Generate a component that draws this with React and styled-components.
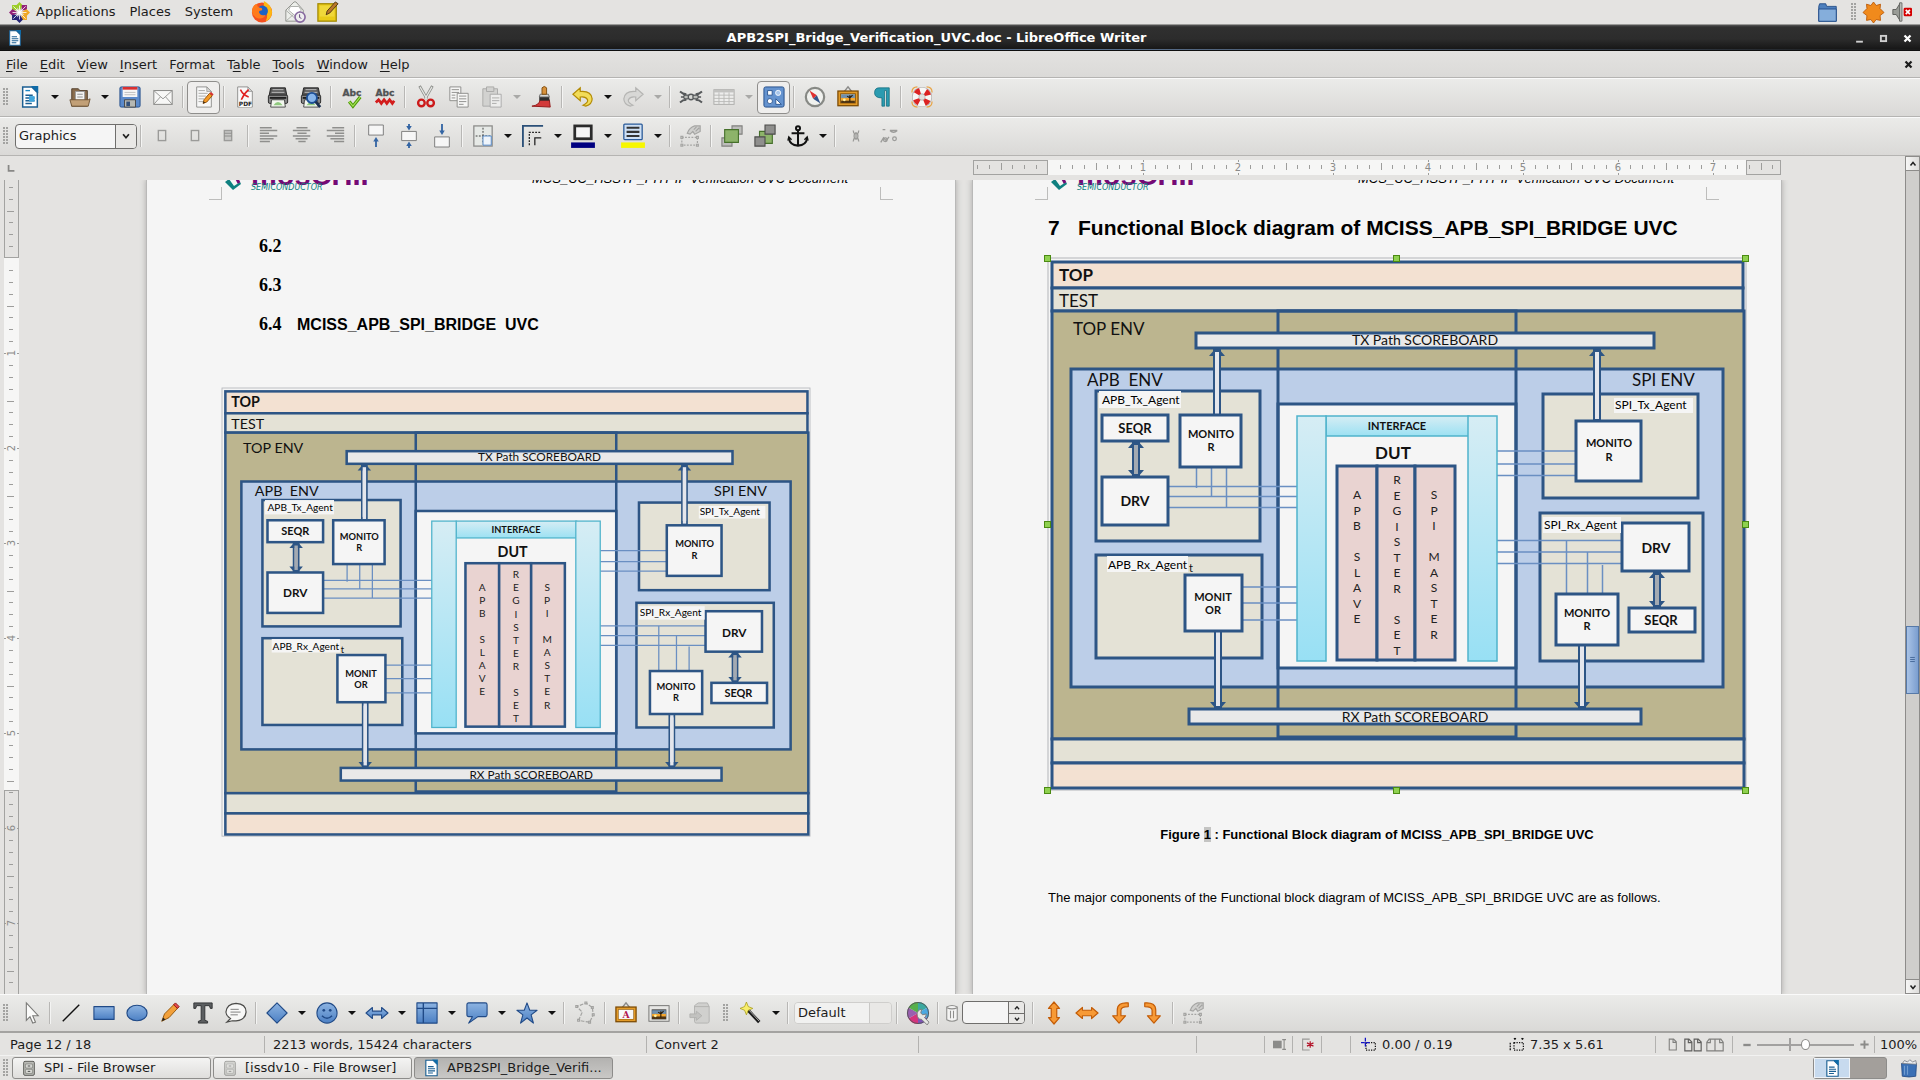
import React from 'react';
import styled, { createGlobalStyle } from 'styled-components';

const Global = createGlobalStyle`
  * { box-sizing: border-box; }
  body { margin: 0; background: #e4e3e1; }
  button, input, select { font: inherit; color: inherit; margin: 0; padding: 0; }
  svg { display: block; }
`;

const Screen = styled.div`
  display: flex;
  flex-direction: column;
  height: 100vh;
  overflow: hidden;
  background: #e4e3e1;
  color: #1c1c1c;
  font: 13px/16px 'DejaVu Sans', sans-serif;
`;

/* ---------- shared pieces ---------- */

const Svg = styled.svg`
  width: ${p => p.$w || 24}px;
  height: ${p => p.$h || 24}px;
  flex: none;
  overflow: visible;
`;

const Grip = styled.span`
  flex: none;
  width: 5px;
  height: 18px;
  margin: 0 ${p => p.$after || 5}px 0 ${p => p.$before || 3}px;
  background-image: radial-gradient(circle at 1px 1px, #a3a3a1 1px, transparent 1px);
  background-size: 3px 3px;
`;

const PlainButton = styled.button`
  border: 0;
  background: none;
  display: flex;
  align-items: center;
  justify-content: center;
`;

/* ---------- desktop panel ---------- */

const Panel = styled.header`
  flex: none;
  height: 25px;
  display: flex;
  align-items: center;
  justify-content: space-between;
  border-bottom: 1px solid #9a9a98;
`;
const PanelGroup = styled.div`
  display: flex;
  align-items: center;
  height: 24px;
  padding: 0 ${p => p.$end || 0}px 0 ${p => p.$start || 0}px;
  gap: ${p => p.$gap || 0}px;
`;
const PanelItem = styled(PlainButton)`
  height: 24px;
  white-space: nowrap;
  padding: 0 ${p => p.$pad || 0}px;
  gap: 6px;
`;

/* ---------- window ---------- */

const TitleBar = styled.div`
  flex: none;
  height: 26px;
  display: grid;
  grid-template-columns: 84px 1fr 84px;
  align-items: center;
  padding-left: 3px;
  color: #fff;
  background:
    linear-gradient(90deg, #1a1a1a, #5d7594 35%, #5d7594 55%, #1a1a1a) 0 24px / 100% 1px no-repeat,
    linear-gradient(#555 0, #303030 2px, #2c2c2c 14px, #171717 24px, #0c0c0c 26px);
`;
const TitleText = styled.h1`
  margin: 0;
  font: bold 13px/20px 'DejaVu Sans', sans-serif;
  text-align: center;
  padding-right: 50px;
`;
const WindowButtons = styled.div`
  display: flex;
  justify-content: flex-end;
  padding-right: 1px;
`;
const WindowButton = styled(PlainButton)`
  width: 24px;
  height: 20px;
`;

const MenuBar = styled.nav`
  flex: none;
  height: 27px;
  display: flex;
  align-items: center;
  border-bottom: 1px solid #b5b4b2;
  background: linear-gradient(#e3e2e0, #dbdad8);
`;
const MenuItem = styled(PlainButton)`
  height: 26px;
  padding: 1px 6px 0;
  u { text-underline-offset: 2px; }
`;
const MenuClose = styled(PlainButton)`
  margin-left: auto;
  width: 24px;
  height: 26px;
`;

const Bar = styled.div`
  flex: none;
  height: 39px;
  display: flex;
  align-items: center;
  padding-bottom: 1px;
  border-top: 1px solid #fafafa;
  border-bottom: ${p => (p.$heavy ? 2 : 1)}px solid ${p => (p.$heavy ? '#a4a3a1' : '#b5b4b2')};
  background: linear-gradient(#ebebe9, #dad9d7);
`;
const Tool = styled(PlainButton)`
  flex: none;
  width: ${p => p.$w || 33}px;
  height: 36px;
`;
const PressedTool = styled(Tool)`
  height: 33px;
  border: 1px solid #8f8e8c;
  border-radius: 4px;
  background: #efeeed;
`;
const Arrow = styled(PlainButton)`
  flex: none;
  width: 17px;
  height: 36px;
  &::after {
    content: '';
    border: 4px solid transparent;
    border-top-color: ${p => (p.$off ? '#a9a9a7' : '#111')};
    border-bottom: 0;
  }
`;
const Sep = styled.span`
  flex: none;
  width: 8px;
  height: 22px;
  background: linear-gradient(90deg, transparent 3px, #b8b7b5 3px, #b8b7b5 4px, #f4f4f3 4px, #f4f4f3 5px, transparent 5px);
`;
const SelectBox = styled.label`
  flex: none;
  width: ${p => p.$w}px;
  height: ${p => (p.$flat ? 22 : 25)}px;
  margin: 0 ${p => (p.$flat ? 1 : 0)}px 0 2px;
  display: flex;
  border: 1px solid ${p => (p.$flat ? '#cfcecc' : '#6f6e6c')};
  border-radius: 4px;
  background: ${p => (p.$flat ? '#e6e5e3' : '#f5f5f5')};
  overflow: hidden;
`;
const SelectArrow = styled.span`
  width: ${p => (p.$flat ? 22 : 21)}px;
  display: flex;
  align-items: center;
  justify-content: center;
  border-left: 1px solid ${p => (p.$flat ? '#c9c8c6' : '#6f6e6c')};
  background: #e9e8e6;
`;
const Select = styled.select`
  appearance: none;
  flex: 1;
  min-width: 0;
  border: 0;
  outline: 0;
  padding-left: 3px;
  background: ${p => (p.$flat ? '#f1f1f0' : 'transparent')};
`;
const Spin = styled.div`
  flex: none;
  width: 63px;
  height: 23px;
  margin-right: 4px;
  display: grid;
  grid-template-columns: 1fr 16px;
  border: 1px solid #6f6e6c;
  border-radius: 4px;
  background: #f5f5f5;
  overflow: hidden;
`;
const SpinInput = styled.input`
  min-width: 0;
  border: 0;
  outline: 0;
  background: transparent;
`;
const SpinSteps = styled.div`
  display: grid;
  grid-template-rows: 1fr 1fr;
  border-left: 1px solid #6f6e6c;
  background: #e9e8e6;
`;
const SpinStep = styled(PlainButton)`
  & + & { border-top: 1px solid #6f6e6c; }
`;

/* ---------- work area ---------- */

const Work = styled.main`
  flex: 1;
  min-height: 0;
  display: grid;
  grid-template: 24px 1fr / 19px 1fr 15px;
`;
const Corner = styled.div`
  display: flex;
  align-items: center;
  padding-left: 8px;
`;
const Spread = styled.div`
  min-width: 0;
  min-height: 0;
  display: flex;
  justify-content: center;
  gap: 18px;
  padding-left: 4px;
  overflow: hidden;
`;
const RulerSlot = styled.div`
  flex: none;
  width: 808px;
  padding-top: 4px;
`;
const SideRuler = styled.div`
  min-height: 0;
  padding-left: 4px;
  overflow: hidden;
`;
const Page = styled.article`
  flex: none;
  width: 808px;
  background: #f5f5f5;
  color: #000;
  font-family: 'Liberation Sans', Arial, sans-serif;
  box-shadow: 0 0 0 1px #b9b9b8, 0 0 6px 1px #aaa9a8;
`;
const PageHead = styled.div`
  display: flex;
  height: 20px;
  padding: 0 62px;
`;
const Mark = styled.span`
  flex: none;
  align-self: flex-end;
  width: 13px;
  height: 13px;
  border: 0 solid #bdbdbc;
  border-bottom-width: 1px;
  border-${p => p.$side}-width: 1px;
`;
const HeadBody = styled.div`
  flex: 1;
  height: 11px;
  display: flex;
  align-items: flex-end;
  justify-content: space-between;
  padding: 0 32px 0 2px;
`;
const Logo = styled.div`
  display: flex;
  align-items: flex-end;
  gap: 9px;
`;
const LogoName = styled.div`
  font: bold 29px/20px 'Liberation Sans', Arial, sans-serif;
  color: #750a75;
`;
const LogoSub = styled.div`
  font: italic 8px/6px 'DejaVu Sans', sans-serif;
  color: #0f8080;
`;
const HeadText = styled.div`
  font-size: 13px;
  line-height: 15px;
  font-style: italic;
  padding-bottom: 5px;
  white-space: nowrap;
`;
const PageBody = styled.div`
  padding: ${p => p.$top}px 75px 0;
`;
const SubHeading = styled.h3`
  margin: 0;
  padding-left: 37px;
  height: 39px;
  display: flex;
  align-items: baseline;
  font-size: 16px;
  line-height: 39px;
  white-space: pre;
`;
const Num = styled.span`
  width: 38px;
  font-family: 'Liberation Serif', 'Times New Roman', serif;
  font-size: 18px;
`;
const Heading = styled.h2`
  margin: 0;
  display: grid;
  grid-template-columns: 30px 1fr;
  font-size: 21px;
  line-height: 24px;
  white-space: nowrap;
`;
const Figure = styled.figure`
  margin: ${p => p.$gap}px 0 0;
`;
const DiagramSvg = styled.svg`
  width: ${p => p.$w}px;
  aspect-ratio: 698 / 532;
  overflow: visible;
  font-family: Lato, 'Open Sans', sans-serif;
`;
const Caption = styled.figcaption`
  margin-top: 37px;
  font-size: 13px;
  line-height: 16px;
  font-weight: bold;
  text-align: center;
  mark { background: #c4c4c3; color: inherit; }
`;
const Para = styled.p`
  margin: 47px 0 0;
  font-size: 13px;
  line-height: 16px;
  white-space: nowrap;
`;

const ScrollBar = styled.div`
  grid-row: 1 / 3;
  grid-column: 3;
  display: flex;
  flex-direction: column;
  border: 1px solid #8d8c8a;
  background: #cfcecc;
`;
const ScrollButton = styled(PlainButton)`
  flex: none;
  height: 14px;
  border: 0 solid #8d8c8a;
  border-${p => p.$edge}-width: 1px;
  background: linear-gradient(90deg, #f6f6f5, #dddcda);
`;
const ScrollGap = styled.span`
  flex: ${p => p.$grow};
`;
const ScrollThumb = styled(PlainButton)`
  flex: none;
  height: 68px;
  border: 1px solid #5679a8;
  background: linear-gradient(90deg, #a9c3e6, #7b9ecf);
`;

/* ---------- status bar and task bar ---------- */

const Status = styled.footer`
  flex: none;
  height: 23px;
  display: grid;
  grid-template-columns: 265px 382px 272px 1fr 68px 28px 29px 29px 305px 77px 142px 45px;
  align-items: center;
  padding-top: 1px;
  border-bottom: 1px solid #f2f2f1;
`;
const Field = styled.div`
  height: 17px;
  display: flex;
  align-items: center;
  gap: ${p => p.$gap || 0}px;
  padding-left: ${p => p.$pad || 8}px;
  border-right: ${p => (p.$last ? 0 : 1)}px solid #b3b2b0;
  white-space: nowrap;
`;
const Part = styled.span`
  display: flex;
  align-items: center;
  gap: 6px;
  width: ${p => (p.$w ? p.$w + 'px' : 'auto')};
`;
const Zoom = styled.input`
  appearance: none;
  width: 97px;
  height: 15px;
  outline: 0;
  background:
    linear-gradient(#a2a1a0, #a2a1a0) 32px 1px / 2px 13px no-repeat,
    linear-gradient(#a2a1a0, #a2a1a0) 0 7px / 100% 2px no-repeat;
  &::-webkit-slider-thumb {
    appearance: none;
    width: 9px;
    height: 11px;
    border: 1px solid #8b8a88;
    border-radius: 50%;
    background: #fff;
  }
`;

const TaskBar = styled.footer`
  flex: none;
  height: 24px;
  display: flex;
  align-items: center;
  gap: 2px;
`;
const Task = styled.button`
  width: 199px;
  height: 22px;
  display: flex;
  align-items: center;
  gap: 7px;
  padding: 0 8px;
  border: 1px solid #8d8c8a;
  border-radius: 3px;
  background: ${p => (p.$active ? 'linear-gradient(#b3b2b0, #c9c8c6)' : 'linear-gradient(#f4f4f3, #dfdedc)')};
  white-space: nowrap;
`;
const Pager = styled.div`
  margin-left: auto;
  display: flex;
  height: 22px;
  border: 1px solid #8d8c8a;
  border-radius: 3px;
  background: #a39f9b;
`;
const Desk = styled(PlainButton)`
  width: 36px;
  background: ${p => (p.$on ? '#c7daee' : 'transparent')};
  border: ${p => (p.$on ? '1px solid #eef3f8' : '0')};
`;
const TrashButton = styled(PlainButton)`
  width: 20px;
  height: 24px;
  margin: 0 1px 0 10px;
`;

/* ---------- icon drawings, each on a 24 unit grid ---------- */

const B = '#3465a4';
const page = (
  <g>
    <path d="M4 1h11l5 5v17H4z" fill="#f8f8f8" stroke="#8d8d8b" />
    <path d="M15 1v5h5z" fill="#d5d5d3" stroke="#8d8d8b" strokeWidth=".7" />
  </g>
);
const writer = (
  <g>
    <path d="M4 1h10l6 6v16H4z" fill="#fff" stroke="#1b5f92" strokeWidth="1.6" />
    <path d="M13 0h8v8z" fill="#0f6ba8" />
    <path d="M7 10h8M7 13h10M7 16h10M7 19h7" stroke="#1b5f92" strokeWidth="1.6" />
  </g>
);
const printer = (
  <g>
    <path d="M4 2h16l2 10H2z" fill="#555" stroke="#222" />
    <path d="M6 4h12M5 7h14" stroke="#aaa" strokeWidth="1.4" />
    <rect x="1.500" y="10" width="21" height="9" rx="1.500" fill="#888" stroke="#222" />
    <path d="M3 12h18v2H3z" fill="#1f1f1f" />
    <path d="M5 15h14l1 8H4z" fill="#f3f7ef" stroke="#444" />
    <path d="M7 21q5-7 10 0z" fill="#8fc97e" />
  </g>
);
const abc = <text x="12" y="11" textAnchor="middle" fontFamily="DejaVu Sans" fontWeight="bold" fontSize="10" fill="#55585a" stroke="#3c3e3f" strokeWidth=".3">Abc</text>;
const lines = xs => <path d={xs.map(([a, b], i) => `M${a} ${3 + i * 3}H${b}`).join('')} stroke="#8f8f8d" strokeWidth="1.400" />;
const frame = (
  <g>
    <path d="M8 6l4-5 4 5" fill="none" stroke="#8a8a88" strokeWidth="1.500" />
    <rect x="1" y="5.500" width="22" height="16" fill="#e39b28" stroke="#7d4b05" strokeWidth="1.400" />
    <rect x="4" y="8.500" width="16" height="10" fill="#f4d58c" stroke="#7d4b05" />
  </g>
);
const sunset = (
  <g>
    <path d="M4.500 9h15v5h-15z" fill="#6f8fae" />
    <path d="M4.500 13h15v3h-15z" fill="#f6a62c" />
    <path d="M4.500 16h15v2.500h-15z" fill="#4d3312" />
    <path d="M14 17v-4l-3-2m3 2l3-3m-3 3v-3" stroke="#2b1a05" strokeWidth="1.200" fill="none" />
    <circle cx="8" cy="15" r="1.500" fill="#fff2a0" />
  </g>
);
const rotateFrame = (
  <g fill="none" stroke="#a5a5a3" strokeWidth="1.300">
    <path d="M8 9q2-6 8-8h6v6l-6 3-2-3-3 3zM15 5l3-3M17 7l4-4" fill="#cfcfcd" />
    <rect x="2" y="13.500" width="17" height="8.500" strokeDasharray="2 1.500" />
    <path d="M1 12.500h2v2H1zM18 12.500h2v2h-2zM1 21h2v2H1zM18 21h2v2h-2z" fill="#e4e3e1" />
  </g>
);
const orange = { fill: '#f79a36', stroke: '#c35c06', strokeWidth: 1.3, strokeLinejoin: 'round' };
const blue = { fill: 'url(#blueFill)', stroke: '#204a87', strokeWidth: 1.2, strokeLinejoin: 'round' };
const cabinet = (
  <g>
    <rect x="4" y="2" width="16" height="21" rx="2" fill="#b9bab5" stroke="#5f605c" strokeWidth="1.500" />
    <path d="M7 6h10v6H7zM7 14h10v6H7z" fill="#e2e3df" stroke="#73746f" />
    <path d="M10 9h4M10 17h4" stroke="#444" strokeWidth="1.500" />
  </g>
);

const ICONS = {
  centos: (
    <g>
      <g fill="#9ccd2a"><path d="M12 0l4 4-4 6-4-6zM3.500 3.500h6v6h-6z" /></g>
      <g fill="#932279"><path d="M0 12l4-4 6 4-6 4zM14.500 3.500h6v6h-6z" /></g>
      <g fill="#efa724"><path d="M24 12l-4 4-6-4 6-4zM14.500 14.500h6v6h-6z" /></g>
      <g fill="#262577"><path d="M12 24l-4-4 4-6 4 6zM3.500 14.500h6v6h-6z" /></g>
      <path d="M12 4v16M4 12h16M5 5l14 14M19 5L5 19" stroke="#fff" strokeWidth=".9" />
    </g>
  ),
  firefox: (
    <g>
      <circle cx="12" cy="12.500" r="11" fill="#f4501f" />
      <path d="M14 0q8 4 9 12a11 11 0 0 1-7 10q4-8-2-13z" fill="#fdb714" />
      <circle cx="12.500" cy="11" r="6" fill="#1c62c4" />
      <path d="M1 12Q1 4 7 3q-1 3 2 4 4 0 3 3-4 0-3 3 2 4 7 2-2 5-8 4-6-2-7-7z" fill="#ff7b1c" />
    </g>
  ),
  mail: (
    <g>
      <path d="M2 10l9-9h2l8 9v12H2z" fill="#eceeea" stroke="#8b8d88" />
      <path d="M5 10l2-4h9l3 4-7 6z" fill="#fff" stroke="#a9aba6" />
      <path d="M2 22l8-7M2 10l9 8" stroke="#a9aba6" />
      <circle cx="17.500" cy="17.500" r="5.500" fill="#eee" stroke="#8769a0" strokeWidth="1.800" />
      <path d="M17 14.500v3.500l2 1" stroke="#5b3f75" fill="none" />
    </g>
  ),
  note: (
    <g>
      <rect x="1" y="3" width="20" height="19" fill="#e9cb19" stroke="#a38a05" strokeWidth="1.400" />
      <path d="M3 5h16v12H3z" fill="#f0d83a" />
      <path d="M10 15l1-4 9-10 3 2-9 10z" fill="#b9772a" stroke="#4e3312" />
    </g>
  ),
  folder: (
    <g>
      <path d="M2 5l1-3h7l1 3h11v17H2z" fill="#4d7fbd" stroke="#204a87" />
      <path d="M2 8h20v14H2z" fill="#85aedb" stroke="#204a87" />
    </g>
  ),
  burst: <path d="M12 0l3 4 5-1.500-.5 5L24 12l-4.500 3.500.5 5.500-5-1-3 4-3-4-5 1 .5-5.500L0 12l4.500-4.500L4 2.500 9 4z" fill="#f08a1c" stroke="#ba5806" />,
  volume: (
    <g>
      <path d="M1 9h4l5-8v22l-5-8H1z" fill="#9a9c97" stroke="#50524e" />
      <path d="M9 1h3v22H9z" fill="#b8bab5" stroke="#50524e" strokeWidth=".8" />
      <rect x="14" y="7" width="10" height="10" rx="1.500" fill="#d40000" />
      <path d="M16.500 9.500l5 5m0-5l-5 5" stroke="#fff" strokeWidth="2" />
    </g>
  ),
  writer,
  newDoc: (
    <g>
      {writer}
      <path d="M7 5h5" stroke="#1b86c4" strokeWidth="1.500" />
      <rect x="11" y="11" width="6" height="6" fill="#3fa6dd" />
    </g>
  ),
  open: (
    <g>
      <path d="M3 3h7l2 2h8v17H3z" fill="#8a6d4d" stroke="#4d3a26" />
      <path d="M7 6h10v10H7z" fill="#f4f4f2" stroke="#999" />
      <path d="M9 9h6M9 12h6" stroke="#888" />
      <path d="M1 15h20l2-1-2 8H3z" fill="#c2a077" stroke="#6d5335" />
    </g>
  ),
  save: (
    <g>
      <rect x="1" y="1" width="22" height="22" rx="1.500" fill="#5b8acb" stroke="#204a87" />
      <path d="M4 1h16v11H4z" fill="#f6f6f6" />
      <path d="M4 1h16v3H4z" fill="#d93030" />
      <path d="M6 7h12M6 9.500h12" stroke="#bbb" />
      <path d="M6 15h12v8H6z" fill="#b6b8b3" stroke="#444" />
      <path d="M8 17h4v5H8z" fill="#33517c" />
    </g>
  ),
  envelope: (
    <g>
      <rect x="2" y="5" width="20" height="15" fill="#f7f7f6" stroke="#80807e" />
      <path d="M2 5l10 9 10-9M2 20l7-8M22 20l-7-8" fill="none" stroke="#939391" />
    </g>
  ),
  edit: (
    <g>
      {page}
      <path d="M6 5h7M6 8h10M6 11h8M6 14h6M6 17h5" stroke="#a5a5a3" />
      <path d="M11 19l1-4 6-7 3 2.500-6 7z" fill="#f59a25" stroke="#8f4d05" />
      <path d="M18 8l1.500-1.500 3 2.500L21 10.500z" fill="#d93030" />
      <path d="M11 19l.6-2.300 1.600 1.600z" fill="#222" />
    </g>
  ),
  pdf: (
    <g>
      {page}
      <path d="M7 4q3 6 9 8M16 4q-5 4-8 11" stroke="#e02020" strokeWidth="1.700" fill="none" />
      <rect x="6" y="16" width="13" height="7" fill="#f8f8f8" />
      <text x="12.500" y="22" textAnchor="middle" fontFamily="DejaVu Sans" fontWeight="bold" fontSize="6.500" fill="#222">PDF</text>
    </g>
  ),
  print: printer,
  preview: (
    <g>
      {printer}
      <circle cx="13" cy="13" r="5.500" fill="#87b5ea" stroke="#1d4f96" strokeWidth="2" />
      <path d="M17 17l5 6" stroke="#1c3050" strokeWidth="3" />
    </g>
  ),
  spell: <g>{abc}<path d="M9 17l4 5 8-10" fill="none" stroke="#4e9a06" strokeWidth="3.600" /><path d="M9 17l4 5 8-10" fill="none" stroke="#a7e35c" strokeWidth="1.300" /></g>,
  autospell: <g>{abc}<path d="M2 18l3-3 3 4 3-4 3 4 3-4 3 4 2-3" fill="none" stroke="#d31c1c" strokeWidth="3" /></g>,
  cut: (
    <g>
      <path d="M5 0l8 14M19 0l-8 14" stroke="#8b8d89" strokeWidth="3" />
      <path d="M5.500 1l7.500 13M18.500 1L11 14" stroke="#e5e6e3" strokeWidth="1.300" />
      <circle cx="7" cy="18.500" r="3.600" fill="none" stroke="#cc1a1a" strokeWidth="2.600" />
      <circle cx="17" cy="18.500" r="3.600" fill="none" stroke="#cc1a1a" strokeWidth="2.600" />
    </g>
  ),
  copy: (
    <g fill="#f6f6f5" stroke="#8a8a88">
      <path d="M2 1h12v15H2z" /><path d="M4 4h8M4 7h8M4 10h4M4 13h4" />
      <path d="M10 8h12v15H10z" /><path d="M12 11h8M12 14h8M12 17h8M12 20h5" />
    </g>
  ),
  paste: (
    <g fill="#d2d2d0" stroke="#a9a9a7">
      <path d="M2 3h16v19H2z" /><path d="M6 1h8v5H6z" />
      <path d="M10 9h12v14H10z" fill="#ededec" /><path d="M12 13h8M12 16h8M12 19h5" />
    </g>
  ),
  brush: (
    <g>
      <path d="M1 22q8-1 9-7h10l1 8z" fill="#d23a3a" stroke="#8f1414" />
      <path d="M9 12h11v4H9z" fill="#2d2d2d" />
      <path d="M10 9h9l1 3H9z" fill="#d9d9d7" stroke="#666" />
      <path d="M12 9V2q2.500-3 5 0v7z" fill="#d8923c" stroke="#7d4b0e" />
    </g>
  ),
  undo: <path d="M1 9l8-7v4q12-1 13 8 0 6-7 8l-3-1q6-3 5-6-2-4-8-3v4z" fill="#f2dc58" stroke="#b38b05" strokeWidth="1.300" />,
  redo: <path d="M23 9l-8-7v4Q3 5 2 14q0 6 7 8l3-1q-6-3-5-6 2-4 8-3v4z" fill="#d8d8d6" stroke="#b5b5b3" strokeWidth="1.300" />,
  link: (
    <g fill="none" stroke="#55585a">
      <path d="M0 6q3 3 7 3M24 6q-3 3-7 3M0 18q3-3 7-3M24 18q-3-3-7-3" strokeWidth="2" />
      <path d="M1 12h7M16 12h7" strokeWidth="1.500" />
      <rect x="4" y="10" width="6" height="4" rx="2" fill="#bbbdb9" strokeWidth="1.400" /><rect x="9" y="9" width="6" height="6" rx="3" fill="#d8d9d6" strokeWidth="1.400" /><rect x="14" y="10" width="6" height="4" rx="2" fill="#bbbdb9" strokeWidth="1.400" />
    </g>
  ),
  table: (
    <g>
      <rect x="1" y="4" width="22" height="16" fill="#ededec" stroke="#a9a9a7" />
      <path d="M1 5.500h22" stroke="#c2c2c0" strokeWidth="3" />
      <path d="M1 10h22M1 13.500h22M1 17h22M6.500 7v13M12 7v13M17.500 7v13" stroke="#b9b9b7" />
    </g>
  ),
  shapes: (
    <g>
      <rect x="1" y="1" width="22" height="22" rx="2" fill="#6593cf" stroke="#204a87" />
      <g fill="#fff" stroke="#204a87" strokeWidth=".9">
        <path d="M5 5h5v5H5zM14 14v6h6z" fill="#fff" /><circle cx="16.500" cy="7.500" r="2.800" fill="#a9c6ea" stroke="#fff" /><circle cx="7.500" cy="16.500" r="2.800" />
      </g>
    </g>
  ),
  compass: (
    <g>
      <circle cx="12" cy="12" r="10" fill="#f0f1ee" stroke="#878985" strokeWidth="2.400" />
      <path d="M6 5l8 5-4 4z" fill="#e03030" /><path d="M18 19l-8-5 4-4z" fill="#35558a" />
    </g>
  ),
  gallery: <g>{frame}{sunset}</g>,
  pilcrow: <path d="M10 2h11v20h-3V5h-2v17h-3v-9q-8 0-8-5.500T10 2z" fill="#2b9bb0" stroke="#12697c" strokeWidth=".8" />,
  help: (
    <g>
      <path d="M1 7q0-6 6-6M17 1q6 0 6 6M1 17q0 6 6 6M17 23q6 0 6-6" fill="none" stroke="#e9a23f" strokeWidth="1.300" />
      <circle cx="12" cy="12" r="7" fill="none" stroke="#a9a9a7" strokeWidth="8" />
      <circle cx="12" cy="12" r="7" fill="none" stroke="#f7f7f6" strokeWidth="6.600" />
      <circle cx="12" cy="12" r="7" fill="none" stroke="#dc2323" strokeWidth="6.600" strokeDasharray="4.800 6.196" strokeDashoffset="-3.098" />
    </g>
  ),
  wrapA: <rect x="8" y="6" width="8" height="11" fill="none" stroke="#9b9b99" strokeWidth="1.500" />,
  wrapC: <g><rect x="8" y="6" width="8" height="11" fill="#c6c6c4" stroke="#9b9b99" strokeWidth="1.500" /><path d="M8 9h8M8 12h8" stroke="#8b8b89" /></g>,
  left: lines([[2, 15], [2, 21], [2, 12], [2, 21], [2, 17], [2, 13]]),
  center: lines([[6, 18], [2, 21], [7, 17], [2, 21], [5, 18], [8, 16]]),
  right: lines([[9, 22], [3, 22], [12, 22], [3, 22], [7, 22], [11, 22]]),
  alignTop: <g><path d="M4 0h16v11H4z" fill="#f6f6f6" stroke="#777" /><path d="M12 24V16" stroke={B} strokeWidth="2" /><path d="M9 18h6l-3-5z" fill={B} /></g>,
  alignMid: <g><path d="M4 7h16v10H4z" fill="#f6f6f6" stroke="#777" /><path d="M12-1v3M12 22v3" stroke={B} strokeWidth="2" /><path d="M9 1h6l-3 5zM9 23h6l-3-5z" fill={B} /></g>,
  alignBot: <g><path d="M4 13h16v11H4z" fill="#f6f6f6" stroke="#777" /><path d="M12-1V7" stroke={B} strokeWidth="2" /><path d="M9 6h6l-3 5z" fill={B} /></g>,
  borders: (
    <g>
      <rect x="2" y="1" width="20" height="22" fill="#e6e9e6" stroke="#8c8c8a" strokeWidth="1.400" />
      <path d="M12 3v18M4 12h16" stroke="#333" strokeDasharray="2 1.500" />
      <path d="M12 12h9v10h-9z" fill="#eef4fb" stroke="#4f86c6" />
    </g>
  ),
  borderStyle: (
    <g fill="none">
      <path d="M1 24V1h22" stroke="#2b5078" strokeWidth="2" />
      <path d="M8 22V8h13" stroke="#222" strokeWidth="1.400" strokeDasharray="2 1.400" />
      <path d="M14 22v-8h7" stroke="#222" strokeWidth="1.400" />
    </g>
  ),
  lineColor: <g><rect x="3" y="1" width="18" height="14" fill="#f5f5f5" stroke="#2b2b2b" strokeWidth="3" /><path d="M-1 19h26v6H-1z" fill="#000080" /></g>,
  fillColor: (
    <g>
      <rect x="2" y="-1" width="20" height="17" rx="1" fill="#cfe0f4" stroke="#2a5a98" strokeWidth="1.400" />
      <path d="M5 3h14M5 7.500h14M5 12h14" stroke="#333" strokeWidth="2.400" />
      <path d="M-1 19h26v6H-1z" fill="#f7f700" />
    </g>
  ),
  rotateFrame,
  front: <g strokeWidth="1.200"><path d="M12 1h11v9H12zM1 14h11v9H1z" fill="#bdbdbb" stroke="#80807e" /><path d="M4 5h15v14H4z" fill="#8db36a" stroke="#45702a" /></g>,
  back: <g strokeWidth="1.200"><path d="M6 7h14v13H6z" fill="#8db36a" stroke="#45702a" /><path d="M12 0h11v10H12zM1 13h11v10H1z" fill="#8f8f8d" stroke="#4b4b49" /></g>,
  anchor: (
    <g fill="none" stroke="#111" strokeWidth="2.200">
      <circle cx="12" cy="3.500" r="2.200" /><path d="M12 6v16M5 9h14M2 14q1 8 10 8.500Q21 22 22 14" /><path d="M1 17l1-4 3 3M23 17l-1-4-3 3" strokeWidth="1.500" />
    </g>
  ),
  chainA: <g fill="none" stroke="#9b9b99" strokeWidth="1.400"><path d="M9 6q0 3 2 4M15 6q0 3-2 4M9 18q0-3 2-4M15 18q0-3-2-4M12 8v8" /><rect x="10" y="9" width="4" height="6" rx="2" /></g>,
  chainB: <g fill="none" stroke="#9b9b99" strokeWidth="1.400"><path d="M3 19l3-5 3 3 3-4M13 6q4 4 8 0M13 6h8M5 5h3" /><circle cx="18" cy="15" r="2" /><circle cx="8" cy="16" r="2" /></g>,
  pointer: <path d="M8 1v19l4-4 3 7 3-1-3-7h6z" fill="#fbfbfa" stroke="#7b7b79" strokeWidth="1.200" />,
  line: <path d="M3 21L21 3" stroke="#111" strokeWidth="1.500" />,
  rect: <rect x="1" y="5" width="22" height="14" {...blue} />,
  ellipse: <ellipse cx="12" cy="12" rx="11" ry="8.500" {...blue} />,
  pencil: (
    <g>
      <path d="M3 21l3-8L17 2l4 4-10 11z" fill="#f2a03a" stroke="#8f5206" />
      <path d="M16 3l2-2 4 4-2 2z" fill="#e24b4b" stroke="#8f1414" /><path d="M3 21l1.500-4 2.500 2z" fill="#222" />
    </g>
  ),
  text: <path d="M2 1h20v6h-2l-1-3h-5v16l3 1v2H7v-2l3-1V4H5L4 7H2z" fill="#5c5f61" stroke="#2f3132" />,
  comment: (
    <g>
      <path d="M2 22l4-4Q1 15 1 11q1-9 11-9.500Q23 2 23 11q-1 9-11 9.500H8z" fill="#f8f8f7" stroke="#4b4b49" strokeWidth="1.300" />
      <path d="M6 8h9M6 11h11M6 14h8" stroke="#777" />
    </g>
  ),
  diamond: <path d="M12 1l11 11-11 11L1 12z" {...blue} />,
  smiley: <g><circle cx="12" cy="12" r="11" {...blue} /><path d="M6.500 15q5.500 5.500 11 0" fill="none" stroke="#204a87" strokeWidth="1.500" /><circle cx="8.500" cy="9" r="1.500" fill="#204a87" /><circle cx="15.500" cy="9" r="1.500" fill="#204a87" /></g>,
  arrows: <path d="M0 12l7-6v4h10V6l7 6-7 6v-4H7v4z" {...blue} />,
  flow: <g><rect x="1" y="1" width="22" height="22" {...blue} /><path d="M1 7h22M8 1v22" stroke="#204a87" strokeWidth="1.500" /></g>,
  callout: <path d="M1 3q0-2 2-2h18q2 0 2 2v11q0 2-2 2h-8l-10 7 4-7H3q-2 0-2-2z" {...blue} />,
  star: <path d="M12 1l3 8h8l-6.500 5 2.500 9-7-5.500L5 23l2.500-9L1 9h8z" {...blue} />,
  points: (
    <g fill="none" stroke="#a3a3a1" strokeWidth="1.300">
      <path d="M5 20L9 11 3 5l10-4 7 5 1 8-4 8-7-1z" strokeDasharray="4 1.500" />
      <path d="M2 4h2v2H2zM12 0h2v2h-2zM19 5h2v2h-2zM20 13h2v2h-2zM4 19h2v2H4zM16 21h2v2h-2z" fill="#e4e3e1" />
    </g>
  ),
  fontwork: <g>{frame}<path d="M4 8.500h16v10H4z" fill="#f8f8f8" /><text x="12" y="17.500" textAnchor="middle" fontFamily="DejaVu Serif" fontWeight="bold" fontSize="10" fill="#b3154e">A</text></g>,
  picture: <g><rect x="1" y="4" width="22" height="17" fill="#e6e6e4" stroke="#6f6f6d" /><rect x="4" y="8" width="16" height="11" fill="#444" />{sunset}</g>,
  extrude: <g fill="#d0d0ce" stroke="#b1b1af"><path d="M6 4l4-3h10l2 4v16q0 2-2 2H8q-2 0-2-2z" /><path d="M6 5h16" /><path d="M1 13h7v-3l6 5-6 5v-3H1z" fill="#c2c2c0" /></g>,
  wand: <g><path d="M8 8l13 14" stroke="#1b1b1b" strokeWidth="3.500" /><path d="M10 9l11 12" stroke="#bbb" /><path d="M7 0l2 5 5 2-5 2-2 5-2-5-5-2 5-2z" fill="#f8ee6c" stroke="#a69a12" strokeWidth=".8" /></g>,
  wheel: (
    <g>
      <path d="M12 12V0a12 12 0 0 1 10.400 6z" fill="#3ba9a0" /><path d="M12 12L22.400 6a12 12 0 0 1 0 12z" fill="#4aa8e0" />
      <path d="M12 12l10.400 6A12 12 0 0 1 12 24z" fill="#7d53b5" /><path d="M12 12v12A12 12 0 0 1 1.600 18z" fill="#d4357d" />
      <path d="M12 12L1.600 18a12 12 0 0 1 0-12z" fill="#9a5fb0" /><path d="M12 12L1.600 6A12 12 0 0 1 12 0z" fill="#56b04b" />
      <circle cx="12" cy="12" r="11.500" fill="none" stroke="#555" />
      <path d="M11 13a5 5 0 0 1 5-5l-1 4 2 2 4-1q0 3-2 4l5 5-2 3-6-6q-5 0-5-6z" fill="#e6e7e4" stroke="#777" />
    </g>
  ),
  glass: <g fill="#f3f3f2" stroke="#8e8e8c" strokeWidth="1.400"><path d="M5 4q7-4 14 0v17q-7 4-14 0z" /><path d="M5 5q7 3 14 0M10 9v10M14 9v10" fill="none" /></g>,
  flipV: <path d="M12 0l6 7h-3v10h3l-6 7-6-7h3V7H6z" {...orange} />,
  flipH: <path d="M0 12l7-6v3h10V6l7 6-7 6v-3H7v3z" {...orange} />,
  rotL: <path d="M21 1q-12-1-12 8v6H4l7 8 7-8h-5V9q0-4 8-4z" {...orange} />,
  rotR: <path d="M3 1q12-1 12 8v6h5l-7 8-7-8h5V9q0-4-8-4z" {...orange} />,
  chevron: <path d="M7 9l5 6 5-6" fill="none" stroke="#222" strokeWidth="3" />,
  chevronUp: <path d="M7 15l5-6 5 6" fill="none" stroke="#222" strokeWidth="3" />,
  min: <path d="M3 18h18v5H3z" fill="#d0d0d0" />,
  max: <rect x="5" y="5" width="14" height="14" fill="none" stroke="#d0d0d0" strokeWidth="5" />,
  close: <path d="M4 4l16 16M20 4L4 20" stroke="currentColor" strokeWidth="6" />,
  tab: <path d="M2 0v20h20" fill="none" stroke="#888886" strokeWidth="6" />,
  grip: <path d="M4 5h16M4 12h16M4 19h16" stroke="#3f6294" strokeWidth="3" />,
  insert: <g><path d="M0 5h16v14H0z" fill="#8b8b89" /><path d="M17 3h7M20.500 3v18M17 21h7" stroke="#8b8b89" strokeWidth="2" /></g>,
  modified: <g><path d="M16 22H3V2h13" fill="none" stroke="#999997" strokeWidth="2" /><path d="M17 6v12M11 9l12 6M23 9l-12 6" stroke="#b3152a" strokeWidth="2.200" /></g>,
  position: <g><rect x="8" y="9" width="15" height="12" fill="none" stroke="#111" strokeWidth="2" strokeDasharray="2 2" /><path d="M7 1v16M0 9h14" stroke="#1212c8" strokeWidth="2" strokeDasharray="6 2" /></g>,
  size: <g fill="none" stroke="#111" strokeWidth="2"><rect x="8" y="9" width="15" height="12" strokeDasharray="2 2" /><path d="M8 2l3 3M23 2l-3 3M11 2L8 5M20 2l3 3M2 9v12" strokeDasharray="3 1.500" /></g>,
  single: <path d="M6 2h8l5 5v15H6zM13 2v6h6" fill="none" stroke="#80807e" strokeWidth="2" />,
  multi: <path d="M-2 2h7l5 5v15H-2zM14 2h7l5 5v15H14zM4 2v6h6M20 2v6h6" fill="none" stroke="#5f5f5d" strokeWidth="2" />,
  book: <path d="M-2 22V7l4-5h10v20zM26 22V7l-4-5H12v20zM-2 8h6V3M26 8h-6V3" fill="none" stroke="#80807e" strokeWidth="2" />,
  minus: <path d="M1 12h22" stroke="#8b8b89" strokeWidth="7" />,
  plus: <path d="M1 12h22M12 1v22" stroke="#8b8b89" strokeWidth="5" />,
  cabinet,
  trash: <g><path d="M2 6h20l-1 17q-9 2-18 0z" fill="#3a70b5" stroke="#1b437c" /><path d="M3 6l3-4 4 2 3-3 4 3 4-2 1 5z" fill="#e9ecef" stroke="#71767c" /><path d="M6 9v12M10 9v12" stroke="#719cd0" strokeWidth="1.500" /></g>,
};

const Icon = ({ name, w, h }) => (
  <Svg viewBox="0 0 24 24" $w={w} $h={h || w} aria-hidden="true">{ICONS[name]}</Svg>
);

/* Toolbar contents: a name is a tool, '|' a separator, 'v' an active arrow, 'x' a dimmed one. */
const Tools = ({ items }) => items.map((it, i) => {
  if (it === '|') return <Sep key={i} />;
  if (it === 'v' || it === 'x') return <Arrow key={i} $off={it === 'x'} aria-label="More options" />;
  const pressed = it.startsWith('*');
  const name = pressed ? it.slice(1) : it;
  const T = pressed ? PressedTool : Tool;
  return <T key={i} aria-label={name}><Icon name={name} w={22} /></T>;
});

const STANDARD = ['newDoc', 'v', 'open', 'v', 'save', 'envelope', '|', '*edit', '|', 'pdf', 'print', 'preview', '|', 'spell', 'autospell', '|', 'cut', 'copy', 'paste', 'x', 'brush', '|', 'undo', 'v', 'redo', 'x', '|', 'link', 'table', 'x', '*shapes', '|', 'compass', 'gallery', 'pilcrow', '|', 'help'];
const FRAME = ['|', 'wrapA', 'wrapA', 'wrapC', '|', 'left', 'center', 'right', '|', 'alignTop', 'alignMid', 'alignBot', '|', 'borders', 'v', 'borderStyle', 'v', 'lineColor', 'v', 'fillColor', 'v', '|', 'rotateFrame', '|', 'front', 'back', 'anchor', 'v', '|', 'chainA', 'chainB'];
const DRAWING = ['pointer', '|', 'line', 'rect', 'ellipse', 'pencil', 'text', 'comment', '|', 'diamond', 'v', 'smiley', 'v', 'arrows', 'v', 'flow', 'v', 'callout', 'v', 'star', 'v', '|', 'points', '|', 'fontwork', 'picture', '|', 'extrude'];
const MENUS = [['', 'F', 'ile'], ['', 'E', 'dit'], ['', 'V', 'iew'], ['', 'I', 'nsert'], ['F', 'o', 'rmat'], ['T', 'a', 'ble'], ['', 'T', 'ools'], ['', 'W', 'indow'], ['', 'H', 'elp']];

/* ---------- rulers ---------- */

const INCH = 95;
const ticks = (length, zero) => {
  const out = [];
  const first = Math.ceil(((2 - zero) * 8) / INCH);
  for (let n = first; zero + (n * INCH) / 8 < length - 2; n += 1) {
    if (n !== 0) out.push({ n, at: Math.round(zero + (n * INCH) / 8) });
  }
  return out;
};

function Ruler({ length, zero, end, vertical }) {
  const [w, h] = vertical ? [15, length] : [length, 15];
  const box = (a, b) => (vertical
    ? <rect x="0.500" y={a + 0.5} width="14" height={b - a - 1} fill="#e4e3e1" stroke="#a3a3a1" />
    : <rect x={a + 0.5} y="0.500" width={b - a - 1} height="14" fill="#e4e3e1" stroke="#a3a3a1" />);
  const seg = (at, a, b) => (vertical ? `M${a} ${at + 0.5}H${b}` : `M${at + 0.5} ${a}V${b}`);
  return (
    <Svg $w={w} $h={h} viewBox={`0 0 ${w} ${h}`} aria-hidden="true">
      <rect width={w} height={h} fill="#f6f6f5" />
      {box(vertical ? -4 : 0, zero)}
      {box(end, length)}
      {ticks(length, zero).map(({ n, at }) => {
        const whole = n % 8 === 0 && n > 0;
        const d = whole ? seg(at, 0, 2) + seg(at, 13, 15) : n % 4 === 0 ? seg(at, 3, 10) : seg(at, 5, 9);
        return (
          <g key={n}>
            <path d={d} stroke="#9d9d9b" />
            {whole && (
              <text
                x={vertical ? 7 : at}
                y={vertical ? at : 7}
                dy={4}
                fontSize="10"
                fill="#8b8b89"
                textAnchor="middle"
                transform={vertical ? `rotate(-90 7 ${at})` : undefined}
              >
                {n / 8}
              </text>
            )}
          </g>
        );
      })}
    </Svg>
  );
}

/* ---------- block diagram ---------- */

const EDGE = '#2d5585';
const Box = ({ x, y, r, b, fill = '#f5f5f5', sw = 3, edge = EDGE }) => (
  <rect x={x} y={y} width={r - x} height={b - y} fill={fill} stroke={edge} strokeWidth={sw} />
);
const Label = ({ x, y, size = 11, bold, middle = true, children, color = '#111' }) => (
  <text x={x} y={y} fontSize={size} fontWeight={bold ? 'bold' : 'normal'} textAnchor={middle ? 'middle' : 'start'} fill={color} xmlSpace="preserve">
    {children}
  </text>
);
const Tag = ({ x, y, r, b, tx, ty, children }) => (
  <g>
    <rect x={x} y={y} width={r - x} height={b - y} fill="#f5f5f5" />
    <Label x={tx} y={ty} size={12} middle={false} color="#000">{children}</Label>
  </g>
);
const Letters = ({ x, y, word }) => word.split('').map((c, i) => (c === ' ' ? null : (
  <Label key={i} x={x} y={y + i * 15.5} size={12} color="#222">{c}</Label>
)));
const Path = ({ x, from, to, both }) => {
  const s = to > from ? 1 : -1;
  return (
    <g>
      <rect x={x - 3} y={Math.min(from, to)} width="6" height={Math.abs(to - from)} fill={both ? '#a3aab2' : '#e4e6ec'} stroke={EDGE} strokeWidth="2" />
      <path d={`M${x - 8} ${to - 7 * s}h16L${x + 2} ${to}h-4z`} fill={EDGE} />
      {both && <path d={`M${x - 8} ${from + 7 * s}h16L${x + 2} ${from}h-4z`} fill={EDGE} />}
      <path d={`M${x} ${from + 4 * s}V${to - 3 * s}`} stroke={both ? '#a3aab2' : '#e4e6ec'} strokeWidth="4" />
    </g>
  );
};

function Diagram({ width, selected }) {
  return (
    <DiagramSvg $w={width} viewBox="1049 258 698 532" role="img" aria-label="Block diagram">
      <rect x="1049" y="258" width="698" height="532" fill="#f5f5f5" stroke="#b3b5ba" />
      <Box x={1053} y={262} r={1744} b={288} fill="#f3e1d2" />
      <Box x={1053} y={288} r={1744} b={311} fill="#e4e2d6" />
      <Box x={1053} y={311} r={1745} b={739} fill="#bcb58f" />
      <Box x={1053} y={739} r={1745} b={763} fill="#e4e2d6" />
      <Box x={1053} y={763} r={1745} b={788} fill="#f3e1d2" />
      <Box x={1072} y={369} r={1724} b={687} fill="#bccee8" />
      <Box x={1279} y={404} r={1517} b={668} />
      <Box x={1279} y={311} r={1517} b={737} fill="none" />

      <Label x={1060} y={281} size={17} bold middle={false}>TOP</Label>
      <Label x={1060} y={307} size={17} middle={false}>TEST</Label>
      <Label x={1074} y={335} size={17} middle={false}>TOP ENV</Label>
      <Label x={1088} y={386} size={17} middle={false}>{'APB  ENV'}</Label>
      <Label x={1633} y={386} size={17} middle={false}>SPI ENV</Label>

      <Box x={1097} y={391} r={1261} b={541} fill="#e4e2d6" />
      <Box x={1097} y={555} r={1263} b={658} fill="#e4e2d6" />
      <Box x={1544} y={394} r={1699} b={498} fill="#e4e2d6" />
      <Box x={1541} y={513} r={1704} b={661} fill="#e4e2d6" />

      <Path x={1218} from={415} to={349} />
      <Path x={1598} from={420} to={349} />
      <Path x={1219} from={631} to={709} />
      <Path x={1583} from={645} to={709} />
      <Box x={1197} y={333} r={1655} b={348} fill="#e9e9e9" />
      <Label x={1426} y={345} size={14}>TX Path SCOREBOARD</Label>
      <Box x={1190} y={709} r={1642} b={724} fill="#e9e9e9" />
      <Label x={1416} y={722} size={14}>RX Path SCOREBOARD</Label>

      <path
        d="M1169 486.500H1299M1169 496.500H1299M1169 507.500H1299M1197.500 467V488M1212.500 467V496M1227.500 467V507M1243 587H1299M1243 603H1299M1243 620H1299M1498 451H1577M1498 464H1577M1498 475.500H1577M1498 540.500H1623M1498 552H1623M1498 563.500H1623M1567.500 540V594M1588.500 552V594M1603.500 565V594"
        fill="none"
        stroke="#6a8fc2"
        strokeWidth="1.500"
      />

      <Path x={1137} from={441} to={477} both />
      <Path x={1658} from={571} to={608} both />

      <Box x={1103} y={415} r={1169} b={441} />
      <Label x={1136} y={433} size={13} bold>SEQR</Label>
      <Box x={1103} y={477} r={1169} b={525} />
      <Label x={1136} y={506} size={14} bold>DRV</Label>
      <Box x={1181} y={415} r={1242} b={467} />
      <Label x={1212} y={438} bold>MONITO</Label>
      <Label x={1212} y={451} bold>R</Label>
      <Box x={1186} y={575} r={1243} b={631} />
      <Label x={1214} y={601} bold>MONIT</Label>
      <Label x={1214} y={614} bold>OR</Label>
      <Box x={1577} y={421} r={1642} b={481} />
      <Label x={1610} y={447} bold>MONITO</Label>
      <Label x={1610} y={461} bold>R</Label>
      <Box x={1623} y={523} r={1690} b={571} />
      <Label x={1657} y={553} size={14} bold>DRV</Label>
      <Box x={1557} y={594} r={1619} b={645} />
      <Label x={1588} y={617} bold>MONITO</Label>
      <Label x={1588} y={630} bold>R</Label>
      <Box x={1630} y={608} r={1696} b={632} />
      <Label x={1662} y={625} size={13} bold>SEQR</Label>

      <Tag x={1100} y={391} r={1182} b={408} tx={1103} ty={404}>APB_Tx_Agent</Tag>
      <Label x={1192} y={572}>t</Label>
      <Tag x={1108} y={556} r={1189} b={572} tx={1109} ty={569}>APB_Rx_Agent</Tag>
      <Tag x={1615} y={398} r={1694} b={413} tx={1616} ty={409}>SPI_Tx_Agent</Tag>
      <Tag x={1544} y={517} r={1622} b={533} tx={1545} ty={529}>SPI_Rx_Agent</Tag>

      <Box x={1327} y={416} r={1470} b={436} fill="url(#cyanHead)" edge="#4fb3cb" sw={1.5} />
      <Box x={1298} y={416} r={1327} b={661} fill="url(#cyanFill)" edge="#4fb3cb" sw={1.5} />
      <Box x={1469} y={416} r={1498} b={661} fill="url(#cyanFill)" edge="#4fb3cb" sw={1.5} />
      <Label x={1398} y={430} bold>INTERFACE</Label>
      <Label x={1394} y={459} size={17} bold>DUT</Label>
      <Box x={1338} y={466} r={1378} b={660} fill="#e9d3d1" />
      <Box x={1378} y={466} r={1416} b={660} fill="#e9d3d1" />
      <Box x={1416} y={466} r={1456} b={660} fill="#e9d3d1" />
      <Letters x={1358} y={499} word="APB SLAVE" />
      <Letters x={1398} y={484} word="REGISTER SET" />
      <Letters x={1435} y={499} word="SPI MASTER" />

      {selected && [258, 524, 790].flatMap(y => [1048, 1397, 1746].map(x => (
        (x === 1397 && y === 524) ? null : <rect key={`${x}-${y}`} x={x - 2.5} y={y - 2.5} width="6" height="6" fill="#8fd14f" stroke="#4b8a12" />
      )))}
    </DiagramSvg>
  );
}

const DocHeader = () => (
  <PageHead>
    <Mark $side="right" />
    <HeadBody>
      <Logo>
        <Svg viewBox="0 0 18 20" $w={18} $h={20} aria-hidden="true">
          <path d="M1 11l8 8 8-6-1-2-6 4-5-7z" fill="#0f8080" />
          <path d="M12 6l3 6" stroke="#750a75" strokeWidth="3" />
        </Svg>
        <div>
          <LogoName>mosCHIP</LogoName>
          <LogoSub>SEMICONDUCTOR</LogoSub>
        </div>
      </Logo>
      <HeadText>MCS_UC_HSSTP_PHY IP Verification UVC Document</HeadText>
    </HeadBody>
    <Mark $side="left" />
  </PageHead>
);

const HiddenDefs = styled(Svg)`
  position: absolute;
  width: 0;
  height: 0;
`;
const Defs = () => (
  <HiddenDefs aria-hidden="true">
    <defs>
      <linearGradient id="blueFill" x2="0" y2="1"><stop stopColor="#8db4e2" /><stop offset="1" stopColor="#4c80c4" /></linearGradient>
      <linearGradient id="cyanFill" x2="0" y2="1"><stop stopColor="#d6edf4" /><stop offset="1" stopColor="#98e0f4" /></linearGradient>
      <linearGradient id="cyanHead" x2="0" y2="1"><stop stopColor="#d6edf4" /><stop offset="1" stopColor="#9ce1f3" /></linearGradient>
    </defs>
  </HiddenDefs>
);

export default function App() {
  return (
    <Screen>
      <Global />
      <Defs />
      <Panel>
        <PanelGroup $start={9}>
          <PanelItem><Icon name="centos" w={21} />Applications</PanelItem>
          <PanelItem $pad={14}>Places</PanelItem>
          <PanelItem>System</PanelItem>
          <PanelGroup $start={18} $gap={11}>
            <PanelItem aria-label="Firefox"><Icon name="firefox" w={22} /></PanelItem>
            <PanelItem aria-label="Mail"><Icon name="mail" w={22} /></PanelItem>
            <PanelItem aria-label="Notes"><Icon name="note" w={22} /></PanelItem>
          </PanelGroup>
        </PanelGroup>
        <PanelGroup $end={8}>
          <PanelItem aria-label="Files"><Icon name="folder" w={21} /></PanelItem>
          <Grip $before={13} $after={7} />
          <PanelGroup $gap={8}>
            <PanelItem aria-label="Updates"><Icon name="burst" w={21} /></PanelItem>
            <PanelItem aria-label="Volume"><Icon name="volume" w={20} /></PanelItem>
          </PanelGroup>
        </PanelGroup>
      </Panel>

      <TitleBar>
        <PanelGroup $start={4}><Icon name="writer" w={16} /></PanelGroup>
        <TitleText>APB2SPI_Bridge_Verification_UVC.doc - LibreOffice Writer</TitleText>
        <WindowButtons>
          <WindowButton aria-label="Minimize"><Icon name="min" w={9} /></WindowButton>
          <WindowButton aria-label="Maximize"><Icon name="max" w={9} /></WindowButton>
          <WindowButton aria-label="Close"><Icon name="close" w={9} /></WindowButton>
        </WindowButtons>
      </TitleBar>

      <MenuBar>
        {MENUS.map(([a, b, c]) => <MenuItem key={a + b + c}><span>{a}<u>{b}</u>{c}</span></MenuItem>)}
        <MenuClose aria-label="Close document"><Icon name="close" w={9} /></MenuClose>
      </MenuBar>

      <Bar><Grip /><Tools items={STANDARD} /></Bar>
      <Bar>
        <Grip />
        <SelectBox $w={122}>
          <Select aria-label="Frame style"><option>Graphics</option></Select>
          <SelectArrow><Icon name="chevron" w={14} /></SelectArrow>
        </SelectBox>
        <Tools items={FRAME} />
      </Bar>

      <Work>
        <Corner><Icon name="tab" w={7} /></Corner>
        <Spread>
          <RulerSlot />
          <RulerSlot><Ruler length={808} zero={75} end={773} /></RulerSlot>
        </Spread>
        <ScrollBar>
          <ScrollButton $edge="bottom" aria-label="Scroll up"><Icon name="chevronUp" w={12} /></ScrollButton>
          <ScrollGap $grow={456} />
          <ScrollThumb aria-label="Scroll position"><Icon name="grip" w={7} /></ScrollThumb>
          <ScrollGap $grow={286} />
          <ScrollButton $edge="top" aria-label="Scroll down"><Icon name="chevron" w={12} /></ScrollButton>
        </ScrollBar>
        <SideRuler><Ruler vertical length={836} zero={78} end={610} /></SideRuler>
        <Spread>
          <Page>
            <DocHeader />
            <PageBody $top={27}>
              <SubHeading><Num>6.2</Num></SubHeading>
              <SubHeading><Num>6.3</Num></SubHeading>
              <SubHeading><Num>6.4</Num>{'MCISS_APB_SPI_BRIDGE  UVC'}</SubHeading>
              <Figure $gap={44}><Diagram width={588} /></Figure>
            </PageBody>
          </Page>
          <Page>
            <DocHeader />
            <PageBody $top={16}>
              <Heading><span>7</span><span>Functional Block diagram of MCISS_APB_SPI_BRIDGE UVC</span></Heading>
              <Figure $gap={18}>
                <Diagram width={698} selected />
                <Caption>Figure <mark>1</mark> : Functional Block diagram of MCISS_APB_SPI_BRIDGE UVC</Caption>
              </Figure>
              <Para>The major components of the Functional block diagram of MCISS_APB_SPI_BRIDGE UVC are as follows.</Para>
            </PageBody>
          </Page>
        </Spread>
      </Work>

      <Bar $heavy>
        <Grip />
        <Tools items={DRAWING} />
        <Grip $before={7} $after={6} />
        <Tools items={['wand', 'v', '|']} />
        <SelectBox $w={98} $flat>
          <Select $flat aria-label="Image mode"><option>Default</option></Select>
          <SelectArrow $flat />
        </SelectBox>
        <Tools items={['|', 'wheel', '|']} />
        <Tool $w={20} aria-label="Transparency"><Icon name="glass" w={18} /></Tool>
        <Spin>
          <SpinInput aria-label="Transparency value" />
          <SpinSteps>
            <SpinStep aria-label="Increase"><Icon name="chevronUp" w={10} /></SpinStep>
            <SpinStep aria-label="Decrease"><Icon name="chevron" w={10} /></SpinStep>
          </SpinSteps>
        </Spin>
        <Tools items={['|', 'flipV', 'flipH', 'rotL', 'rotR', '|', 'rotateFrame']} />
      </Bar>

      <Status>
        <Field $pad={10}>Page 12 / 18</Field>
        <Field>2213 words, 15424 characters</Field>
        <Field>Convert 2</Field>
        <Field />
        <Field />
        <Field><Icon name="insert" w={13} /></Field>
        <Field><Icon name="modified" w={13} /></Field>
        <Field />
        <Field $pad={10}>
          <Part $w={148}><Icon name="position" w={15} />0.00 / 0.19</Part>
          <Part><Icon name="size" w={15} />7.35 x 5.61</Part>
        </Field>
        <Field $pad={10} $gap={6}><Icon name="single" w={13} /><Icon name="multi" w={16} h={14} /><Icon name="book" w={16} h={14} /></Field>
        <Field $pad={10} $gap={6}>
          <Icon name="minus" w={8} />
          <Zoom type="range" aria-label="Zoom" defaultValue={50} />
          <Icon name="plus" w={9} />
        </Field>
        <Field $pad={5} $last>100%</Field>
      </Status>

      <TaskBar>
        <Grip $after={2} />
        <Task><Icon name="cabinet" w={16} h={18} /><span>SPI - File Browser</span></Task>
        <Task><Svg viewBox="0 0 24 24" $w={16} $h={18} opacity=".5" aria-hidden="true">{cabinet}</Svg><span>[issdv10 - File Browser]</span></Task>
        <Task $active><Icon name="writer" w={17} h={18} /><span>APB2SPI_Bridge_Verifi...</span></Task>
        <Pager>
          <Desk $on aria-label="Workspace 1"><Icon name="writer" w={17} /></Desk>
          <Desk aria-label="Workspace 2" />
        </Pager>
        <TrashButton aria-label="Trash"><Icon name="trash" w={18} h={20} /></TrashButton>
      </TaskBar>
    </Screen>
  );
}
